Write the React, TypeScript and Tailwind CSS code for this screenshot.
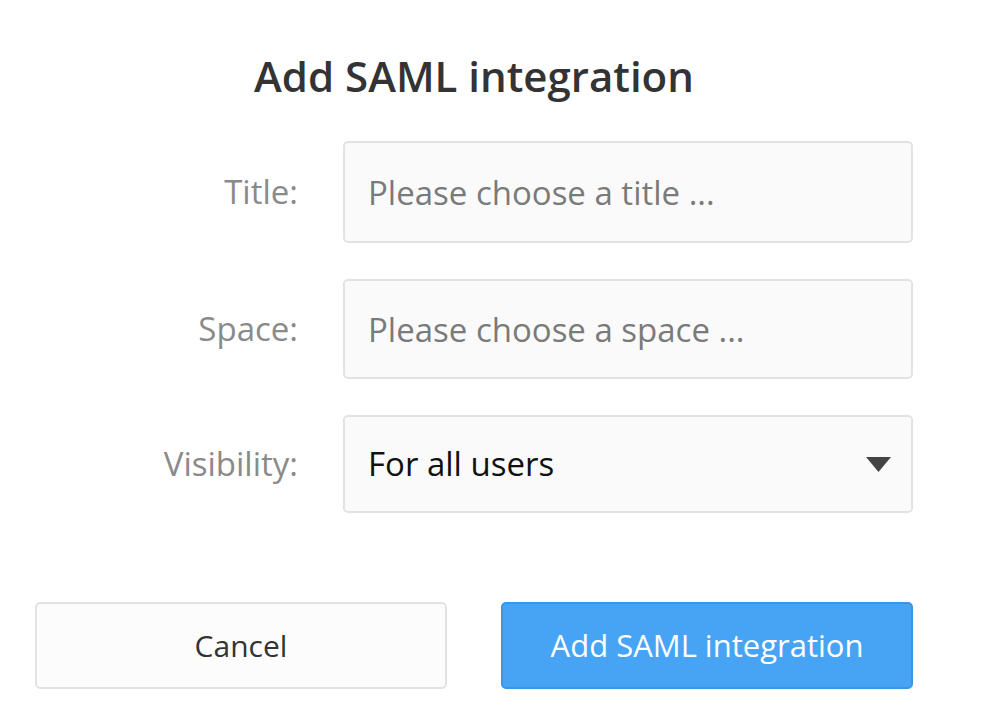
import React from 'react';

const font = { fontFamily: '"Open Sans", "Noto Sans", sans-serif' };

function Field({ label, children }: { label: string; children: React.ReactNode }) {
  return (
    <div className="flex items-center">
      <label className="w-[308px] shrink-0 pr-[45px] text-right text-[33px] text-[#8a8a8a]">{label}</label>
      {children}
    </div>
  );
}

export default function App() {
  return (
    <div className="min-h-[718px] w-[996px] bg-white" style={font}>
      <div className="ml-[35px] w-[878px] pt-[48px]">
        <h1 className="text-center text-[42px] font-semibold leading-[56px] text-[#333333]">
          Add SAML integration
        </h1>

        <div className="mt-[37px] flex flex-col gap-[36px]">
          <Field label="Title:">
            <input
              className="h-[102px] w-[570px] rounded-[5px] border-2 border-[#e2e2e2] bg-[#fafafa] px-[23px] text-[33px] text-[#333] outline-none placeholder:text-[#7a7a7a]"
              placeholder="Please choose a title ..."
              style={font}
            />
          </Field>
          <Field label="Space:">
            <input
              className="h-[100px] w-[570px] rounded-[5px] border-2 border-[#e2e2e2] bg-[#fafafa] px-[23px] text-[33px] text-[#333] outline-none placeholder:text-[#7a7a7a]"
              placeholder="Please choose a space ..."
              style={font}
            />
          </Field>
          <Field label="Visibility:">
            <div className="flex h-[98px] w-[570px] items-center justify-between rounded-[5px] border-2 border-[#e2e2e2] bg-[#fafafa] pl-[23px] pr-[20px]">
              <span className="text-[33px] text-[#111]">For all users</span>
              <svg width="25" height="15" viewBox="0 0 25 15">
                <polygon points="0,0 25,0 12.5,15" fill="#444" />
              </svg>
            </div>
          </Field>
        </div>

        <div className="mt-[89px] flex justify-between">
          <button className="h-[87px] w-[412px] rounded-[5px] border-2 border-[#e2e2e2] bg-[#fcfcfc] text-[30px] text-[#333]">
            Cancel
          </button>
          <button className="h-[87px] w-[412px] rounded-[5px] border-2 border-[#3d95e6] bg-[#47a4f5] text-[31px] text-white">
            Add SAML integration
          </button>
        </div>
      </div>
    </div>
  );
}
